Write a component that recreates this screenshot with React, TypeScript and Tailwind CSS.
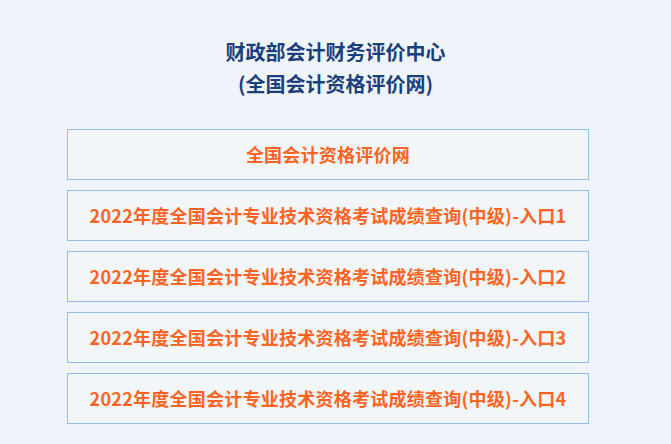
const LINKS = [
  "全国会计资格评价网",
  "2022年度全国会计专业技术资格考试成绩查询(中级)-入口1",
  "2022年度全国会计专业技术资格考试成绩查询(中级)-入口2",
  "2022年度全国会计专业技术资格考试成绩查询(中级)-入口3",
  "2022年度全国会计专业技术资格考试成绩查询(中级)-入口4",
];

export default function App() {
  return (
    <div
      className="min-h-screen bg-[#eef4fa] pt-[36px]"
      style={{ fontFamily: '"Noto Sans CJK SC", "Noto Sans", sans-serif' }}
    >
      {/* Header */}
      <div className="text-center font-bold text-[20px] leading-[32px] text-[#1b3f7c]">
        <p>财政部会计财务评价中心</p>
        <p>(全国会计资格评价网)</p>
      </div>

      {/* Entry links */}
      <div className="ml-[67px] mt-[29px] flex w-[522px] flex-col gap-[10px]">
        {LINKS.map((label) => (
          <a
            key={label}
            href="#"
            className="flex h-[51px] items-center justify-center border border-[#8fbde8] bg-[#f2f6f9] text-[18px] font-bold tracking-[0.25px] text-[#ff6422]"
          >
            {label}
          </a>
        ))}
      </div>
    </div>
  );
}
